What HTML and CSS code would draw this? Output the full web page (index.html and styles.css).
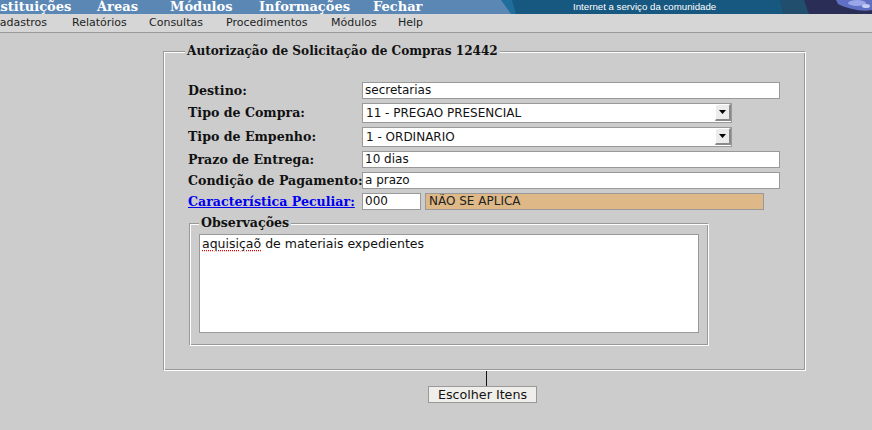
FILE: index.html
```html
<!DOCTYPE html>
<html lang="pt-BR">
<head>
<meta charset="utf-8">
<title>Autorização de Solicitação de Compras</title>
<link rel="stylesheet" href="styles.css">
</head>
<body>
<div class="topbar">
  <svg class="banner" width="872" height="14" viewBox="0 0 872 14" aria-hidden="true">
    <rect width="872" height="14" fill="#5b87b5"/>
    <polygon points="501,0 872,0 872,14 511,14" fill="#1f6d9b"/>
    <polygon points="512,0 872,0 872,14 516,14" fill="#16587f"/>
    <polygon points="780,0 872,0 872,14 783,14" fill="#214e6c"/>
    <polygon points="804,0 872,0 872,14 809,14" fill="#2a2d55"/>
    <path d="M836 0 H872 V10 C862 12 848 9 838 4 Z" fill="#5f6fc4"/>
    <ellipse cx="857" cy="3" rx="9" ry="3" fill="#9aa6e8"/>
    <ellipse cx="866" cy="6" rx="4" ry="2" fill="#c4ccf4"/>
  </svg>
  <div class="topnav">
    <span class="tn tn-inst">Instituições</span>
    <span class="tn tn-areas">Áreas</span>
    <span class="tn tn-mod">Módulos</span>
    <span class="tn tn-info">Informações</span>
    <span class="tn tn-fechar">Fechar</span>
    <span class="slogan">Internet a serviço da comunidade</span>
  </div>
</div>
<div class="menubar">
  <span class="mi mi-cad">Cadastros</span>
  <span class="mi mi-rel">Relatórios</span>
  <span class="mi mi-con">Consultas</span>
  <span class="mi mi-proc">Procedimentos</span>
  <span class="mi mi-mod">Módulos</span>
  <span class="mi">Help</span>
</div>

<div class="main">
  <fieldset class="box">
    <legend class="box-legend">Autorização de Solicitação de Compras 12442</legend>
    <div class="box-inner">
      <div class="grid">
        <span class="lbl">Destino:</span>
        <div class="inp wide">secretarias</div>

        <span class="lbl">Tipo de Compra:</span>
        <div class="sel"><span class="sel-text">11 - PREGAO PRESENCIAL</span><span class="sel-btn"><svg width="7" height="4" viewBox="0 0 7 4"><polygon points="0,0 7,0 3.5,4" fill="#000"/></svg></span></div>

        <span class="lbl">Tipo de Empenho:</span>
        <div class="sel"><span class="sel-text">1 - ORDINARIO</span><span class="sel-btn"><svg width="7" height="4" viewBox="0 0 7 4"><polygon points="0,0 7,0 3.5,4" fill="#000"/></svg></span></div>

        <span class="lbl">Prazo de Entrega:</span>
        <div class="inp wide">10 dias</div>

        <span class="lbl">Condição de Pagamento:</span>
        <div class="inp wide">a prazo</div>

        <a class="lbl link" href="#">Característica Peculiar:</a>
        <div class="code-row">
          <div class="inp code">000</div>
          <div class="inp desc">NÃO SE APLICA</div>
        </div>

        <fieldset class="obs">
          <legend class="obs-legend">Observações</legend>
          <div class="textarea"><span class="spell">aquisiçaõ</span> de materiais expedientes</div>
        </fieldset>
      </div>
    </div>
  </fieldset>
  <div class="actions">
    <span class="cursor-line"></span>
    <button class="btn" type="button">Escolher Itens</button>
  </div>
</div>
</body>
</html>
```

FILE: styles.css
```css
* { box-sizing: border-box; }

html, body {
  margin: 0;
  background: #cccccc;
  font-family: "DejaVu Sans", sans-serif;
  overflow: hidden;
}

body {
  width: 872px;
  height: 430px;
}

/* top banner */
.topbar {
  display: grid;
  height: 14px;
  overflow: hidden;
}
.topbar > * { grid-area: 1 / 1; }
.banner { display: block; }

.topnav {
  display: flex;
  margin-left: -15px;
  font: bold 13px/14px "DejaVu Serif", serif;
  color: #ffffff;
  white-space: nowrap;
}
.tn-inst { width: 112px; }
.tn-areas { width: 73px; }
.tn-mod { width: 89px; }
.tn-info { width: 114px; }
.tn-fechar { width: 60px; }
.slogan {
  margin-left: 140px;
  font: 9.7px/14px "Liberation Sans", sans-serif;
  color: #ffffff;
}

/* second menu */
.menubar {
  display: flex;
  height: 19px;
  background: #d6d6d6;
  border-bottom: 1px solid #9a9a9a;
  font: 11px/18px "DejaVu Sans", sans-serif;
  color: #1e1e1e;
  white-space: nowrap;
  overflow: hidden;
}
.mi-cad { margin-left: -8px; width: 80px; }
.mi-rel { width: 77px; }
.mi-con { width: 77px; }
.mi-proc { width: 105px; }
.mi-mod { width: 67px; }

/* main form */
.main {
  padding: 10px 0 0 163px;
}

.box {
  width: 643px;
  margin: 0;
  padding: 0 0 24px 0;
  border: 1px solid;
  border-color: #999999 #ffffff #ffffff #999999;
  box-shadow: inset 1px 1px 0 #ffffff, inset -1px -1px 0 #999999;
}
.box-legend {
  margin-left: 21px;
  padding: 0 2px;
  background: #cccccc;
  font: bold 12.1px/16px "DejaVu Serif", serif;
  color: #111111;
}
.box-inner {
  padding: 23px 0 0 24px;
}

.grid {
  display: grid;
  grid-template-columns: 174px 418px;
  row-gap: 4px;
  align-items: center;
}

.lbl {
  font: bold 12.6px/16px "DejaVu Serif", serif;
  color: #111111;
  white-space: nowrap;
}
.link {
  color: #0000ee;
  text-decoration: underline;
}

.inp {
  height: 17px;
  border: 1px solid #999999;
  background: #ffffff;
  font: 12px/15px "DejaVu Sans", sans-serif;
  color: #111111;
  padding-left: 2px;
  white-space: nowrap;
  overflow: hidden;
}
.wide { width: 418px; }

.sel {
  display: flex;
  width: 370px;
  height: 20px;
  border: 1px solid #999999;
  background: #ffffff;
  font: 12px/18px "DejaVu Sans", sans-serif;
  color: #111111;
}
.sel-text {
  flex: 1;
  padding-left: 3px;
  white-space: nowrap;
}
.sel-btn {
  display: flex;
  align-items: center;
  justify-content: center;
  width: 16px;
  margin: 0 0 1px 0;
  background: #ececec;
  border-top: 1px solid #ffffff;
  border-left: 1px solid #ffffff;
  border-right: 2px solid #8a8a8a;
  border-bottom: 2px solid #8a8a8a;
}
.sel-btn svg { display: block; }

.code-row {
  display: flex;
  gap: 4px;
}
.code { width: 59px; }
.desc {
  width: 339px;
  background: #deb887;
  padding-left: 3px;
  color: #222222;
}

.obs {
  grid-column: 1 / -1;
  width: 520px;
  margin: 1px 0 0 1px;
  padding: 3px 9px 12px 9px;
  border: 1px solid;
  border-color: #999999 #ffffff #ffffff #999999;
  box-shadow: inset 1px 1px 0 #ffffff, inset -1px -1px 0 #999999;
}
.obs-legend {
  padding: 0 2px;
  background: #cccccc;
  font: bold 12.6px/16px "DejaVu Serif", serif;
  color: #111111;
}
.textarea {
  width: 500px;
  height: 99px;
  border: 1px solid #999999;
  background: #ffffff;
  padding: 1px 2px;
  font: 12.5px/15px "DejaVu Sans", sans-serif;
  color: #111111;
}
.spell {
  text-decoration: underline dotted #e00000;
  text-underline-offset: 2px;
}

.actions {
  display: flex;
  flex-direction: column;
  align-items: flex-start;
  width: 643px;
}
.cursor-line {
  display: block;
  width: 1px;
  height: 15px;
  margin-left: 323px;
  background: #111111;
}
.btn {
  width: 109px;
  height: 17px;
  margin-left: 265px;
  padding: 0;
  border: 1px solid #999999;
  border-radius: 0;
  background: #efeeea;
  font: 12.7px/15px "DejaVu Sans", sans-serif;
  color: #111111;
}
```
